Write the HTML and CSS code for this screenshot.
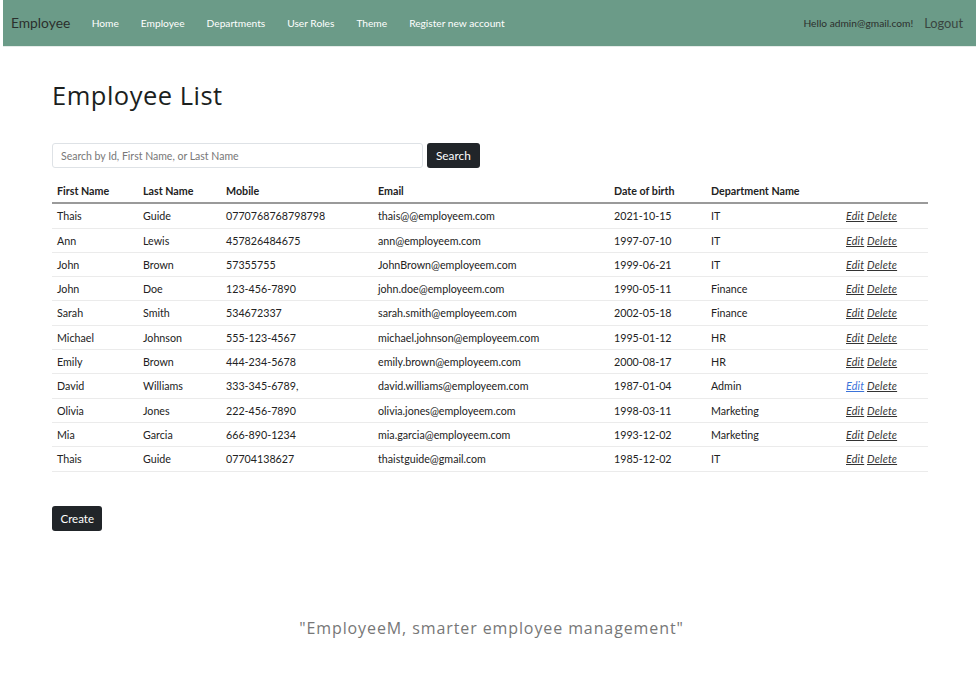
FILE: index.html
```html
<!DOCTYPE html>
<html>
<head>
<meta charset="utf-8">
<link rel="stylesheet" href="styles.css">
</head>
<body>
<div class="page">
  <nav class="navbar">
    <a class="brand">Employee</a>
    <ul class="nav-links">
      <li>Home</li>
      <li>Employee</li>
      <li>Departments</li>
      <li>User Roles</li>
      <li>Theme</li>
      <li>Register new account</li>
    </ul>
    <div class="nav-right">
      <span class="hello">Hello admin@gmail.com!</span>
      <span class="logout">Logout</span>
    </div>
  </nav>
  <main class="content">
    <h1 class="title">Employee List</h1>
    <form class="search">
      <input class="search-input" type="text" placeholder="Search by Id, First Name, or Last Name">
      <button class="btn" type="button">Search</button>
    </form>
    <table class="list">
      <colgroup>
        <col style="width:86px"><col style="width:83px"><col style="width:152px"><col style="width:236px"><col style="width:97px"><col style="width:135px"><col style="width:87px">
      </colgroup>
      <thead>
        <tr><th>First Name</th><th>Last Name</th><th>Mobile</th><th>Email</th><th>Date of birth</th><th>Department Name</th><th></th></tr>
      </thead>
      <tbody>
        <tr><td>Thais</td><td>Guide</td><td>0770768768798798</td><td>thais@@employeem.com</td><td>2021-10-15</td><td>IT</td><td class="act"><a>Edit</a> <a>Delete</a></td></tr>
        <tr><td>Ann</td><td>Lewis</td><td>457826484675</td><td>ann@employeem.com</td><td>1997-07-10</td><td>IT</td><td class="act"><a>Edit</a> <a>Delete</a></td></tr>
        <tr><td>John</td><td>Brown</td><td>57355755</td><td>JohnBrown@employeem.com</td><td>1999-06-21</td><td>IT</td><td class="act"><a>Edit</a> <a>Delete</a></td></tr>
        <tr><td>John</td><td>Doe</td><td>123-456-7890</td><td>john.doe@employeem.com</td><td>1990-05-11</td><td>Finance</td><td class="act"><a>Edit</a> <a>Delete</a></td></tr>
        <tr><td>Sarah</td><td>Smith</td><td>534672337</td><td>sarah.smith@employeem.com</td><td>2002-05-18</td><td>Finance</td><td class="act"><a>Edit</a> <a>Delete</a></td></tr>
        <tr><td>Michael</td><td>Johnson</td><td>555-123-4567</td><td>michael.johnson@employeem.com</td><td>1995-01-12</td><td>HR</td><td class="act"><a>Edit</a> <a>Delete</a></td></tr>
        <tr><td>Emily</td><td>Brown</td><td>444-234-5678</td><td>emily.brown@employeem.com</td><td>2000-08-17</td><td>HR</td><td class="act"><a>Edit</a> <a>Delete</a></td></tr>
        <tr><td>David</td><td>Williams</td><td>333-345-6789,</td><td>david.williams@employeem.com</td><td>1987-01-04</td><td>Admin</td><td class="act"><a class="hover">Edit</a> <a>Delete</a></td></tr>
        <tr><td>Olivia</td><td>Jones</td><td>222-456-7890</td><td>olivia.jones@employeem.com</td><td>1998-03-11</td><td>Marketing</td><td class="act"><a>Edit</a> <a>Delete</a></td></tr>
        <tr><td>Mia</td><td>Garcia</td><td>666-890-1234</td><td>mia.garcia@employeem.com</td><td>1993-12-02</td><td>Marketing</td><td class="act"><a>Edit</a> <a>Delete</a></td></tr>
        <tr><td>Thais</td><td>Guide</td><td>07704138627</td><td>thaistguide@gmail.com</td><td>1985-12-02</td><td>IT</td><td class="act"><a>Edit</a> <a>Delete</a></td></tr>
      </tbody>
    </table>
    <button class="btn create" type="button">Create</button>
  </main>
  <footer class="footer">"EmployeeM, smarter employee management"</footer>
</div>
</body>
</html>
```
FILE: styles.css
```css
* { box-sizing: border-box; }
html, body { margin: 0; padding: 0; background: #fff; }
body {
  font-family: Lato, "Liberation Sans", sans-serif;
  color: #212529;
  font-size: 11px;
}
.page { padding-left: 3px; }
.navbar {
  height: 47px;
  background: #6b9b88;
  display: flex;
  align-items: center;
  padding: 0 13px 1px 8px;
  border-bottom: 1px solid #e6ece9;
}
.brand {
  font-size: 13.8px;
  color: #2b2f2d;
  margin-right: 10.5px;
}
.nav-links {
  display: flex;
  list-style: none;
  margin: 0;
  padding: 0;
  flex: 1;
}
.nav-links li {
  color: #fff;
  font-size: 10.2px;
  padding: 0 11px;
}
.nav-right { display: flex; align-items: center; gap: 11px; }
.hello { font-size: 10.2px; color: #2b2f2d; }
.logout { font-size: 12.8px; color: #3a4540; }

.content { padding: 0 48px 0 49px; }
.title {
  font-family: "Open Sans", sans-serif;
  font-weight: 400;
  font-size: 25.5px;
  color: #1c1f1e;
  margin: 33px 0 0;
  line-height: 30px;
  letter-spacing: 0.5px;
}
.search {
  display: flex;
  gap: 4px;
  margin-top: 33px;
}
.search-input {
  width: 371px;
  height: 25px;
  border: 1px solid #dee2e6;
  border-radius: 3px;
  padding: 0 8px;
  font-family: Lato, sans-serif;
  font-size: 10.5px;
  color: #212529;
  outline: none;
}
.search-input::placeholder { color: #777; }
.btn {
  height: 25px;
  background: #212529;
  color: #fff;
  border: none;
  border-radius: 3px;
  padding: 0 9px;
  font-family: Lato, sans-serif;
  font-size: 11.8px;
}
.list {
  width: 876px;
  table-layout: fixed;
  border-collapse: collapse;
  margin-top: 9px;
}
.list th, .list td {
  text-align: left;
  padding: 4px 5px;
  line-height: 15.3px;
  font-size: 10.7px;
  white-space: nowrap;
  color: #222;
}
.list th {
  font-weight: 700;
  padding-top: 6px;
  padding-bottom: 4px;
  border-bottom: 2px solid #9a9a9a;
}
.list td { border-bottom: 1px solid #ebebeb; }
.act a {
  font-style: italic;
  text-decoration: underline;
  color: #333;
  letter-spacing: 0.2px;
}
.act a.hover { color: #3b73d9; }
.create { margin-top: 34px; height: 25px; padding: 0 8.5px; font-size: 11.5px; }
.footer {
  text-align: center;
  font-family: "Open Sans", sans-serif;
  color: #777;
  font-size: 16px;
  letter-spacing: 0.9px;
  margin-top: 86px;
  padding-left: 4px;
}
```
